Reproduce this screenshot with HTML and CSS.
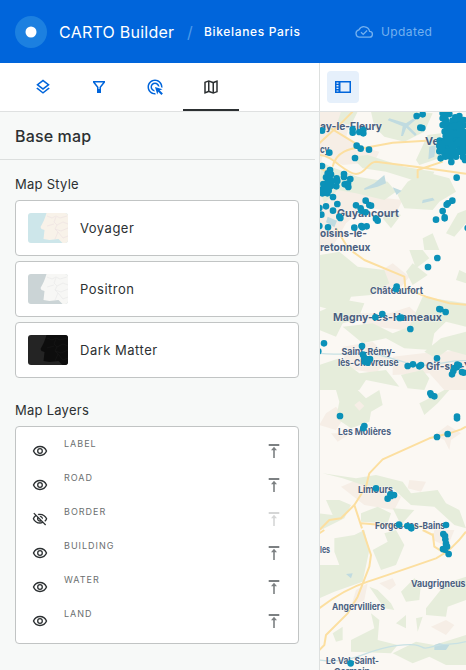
FILE: index.html
```html
<!DOCTYPE html>
<html lang="en">
<head>
<meta charset="utf-8">
<title>CARTO Builder</title>
<link rel="stylesheet" href="styles.css">
</head>
<body>
<svg width="0" height="0" class="defs">
  <defs>
    <symbol id="eye" viewBox="0 0 18 18"><path d="M2.500 9C3.800 6 6.200 4.500 9 4.500S14.200 6 15.500 9C14.200 12 11.800 13.500 9 13.500S3.800 12 2.500 9Z" fill="none" stroke="currentColor" stroke-width="1.400"/><circle cx="9" cy="9" r="2.300" fill="none" stroke="currentColor" stroke-width="1.300"/></symbol>
    <symbol id="eye-off" viewBox="0 0 24 24"><path d="M12 6c3.790 0 7.170 2.130 8.820 5.500-.59 1.220-1.420 2.270-2.410 3.120l1.410 1.410c1.390-1.230 2.490-2.770 3.180-4.530C21.270 7.110 17 4 12 4c-1.270 0-2.490.2-3.640.57l1.650 1.650C10.660 6.090 11.320 6 12 6zm-1.070 1.140L13 9.210c.57.25 1.030.71 1.280 1.280l2.070 2.070c.08-.34.14-.7.14-1.070C16.500 9.010 14.480 7 12 7c-.37 0-.72.05-1.070.14zM2.010 3.870l2.680 2.680C3.060 7.830 1.770 9.530 1 11.500 2.730 15.890 7 19 12 19c1.520 0 2.980-.29 4.320-.82l3.420 3.420 1.410-1.410L3.420 2.450 2.010 3.870zm7.500 7.500l2.610 2.610c-.04.01-.08.02-.12.02-1.380 0-2.500-1.120-2.500-2.500 0-.05.01-.08.01-.13zm-3.400-3.400l1.750 1.750c-.23.55-.36 1.150-.36 1.780 0 2.480 2.020 4.500 4.500 4.500.63 0 1.230-.13 1.770-.36l.98.98c-.88.24-1.800.38-2.750.38-3.790 0-7.170-2.130-8.820-5.500.7-1.430 1.720-2.610 2.930-3.530z" fill="currentColor"/></symbol>
    <symbol id="to-top" viewBox="0 0 18 18"><path d="M3.700 2h10.600v2H3.700zM8.200 16V8.200H6l3-3.400 3 3.400H9.800V16z" fill="currentColor"/></symbol>
  </defs>
</svg>
<div class="app">
  <header class="header">
    <svg class="logo" viewBox="0 0 32 32"><circle cx="16" cy="16" r="16" fill="#1c80e0"/><circle cx="16" cy="16" r="5.500" fill="#fff"/></svg>
    <span class="product">CARTO Builder</span>
    <span class="slash">/</span>
    <span class="project">Bikelanes Paris</span>
    <svg class="cloud" viewBox="0 0 18 18"><path d="M4.500 14.200h9.800a2.950 2.950 0 0 0 .3-5.900A5.700 5.700 0 0 0 3.900 6.900 3.700 3.700 0 0 0 4.500 14.200ZM6 9.300l2.200 2.100 3.900-3.900" fill="none" stroke="currentColor" stroke-width="1.300"/></svg>
    <span class="status">Updated</span>
  </header>
  <main class="body">
    <aside class="sidebar">
      <nav class="tabs">
        <div class="tab"><svg viewBox="0 0 24 24"><path d="M11.990 18.540l-7.370-5.730L3 14.070l9 7 9-7-1.630-1.270zM12 16l7.360-5.730L21 9l-9-7-9 7 1.630 1.270L12 16zm0-11.470L17.740 9 12 13.470 6.260 9 12 4.530z"/></svg></div>
        <div class="tab"><svg viewBox="0 0 18 18"><path d="M3 3h12v1.500l-4 5V15H7V9.500l-4-5zM5 4.500l3.500 4.400V11h1V8.900L13 4.500z" fill-rule="evenodd"/></svg></div>
        <div class="tab"><svg viewBox="0 0 24 24"><path d="M11.710 17.990C8.530 17.840 6 15.220 6 12c0-3.310 2.690-6 6-6 3.220 0 5.840 2.530 5.990 5.710l-2.100-.63C15.480 9.310 13.890 8 12 8c-2.210 0-4 1.790-4 4 0 1.890 1.310 3.480 3.080 3.890l.63 2.100zM22 12c0 .3-.01.6-.04.9l-1.970-.59c.01-.1.010-.21.010-.31 0-4.420-3.580-8-8-8s-8 3.580-8 8 3.580 8 8 8c.1 0 .21 0 .31-.01l.59 1.970c-.3.03-.6.04-.9.04-5.520 0-10-4.480-10-10S6.480 2 12 2s10 4.480 10 10zm-3.770 4.260L22 15l-10-3 3 10 1.260-3.770 4.270 4.270 1.980-1.980-4.280-4.260z"/></svg></div>
        <div class="tab active"><svg viewBox="0 0 24 24"><path d="M20.500 3l-.16.03L15 5.100 9 3 3.360 4.900c-.21.07-.36.25-.36.48V20.500c0 .28.22.5.5.5l.16-.03L9 18.900l6 2.100 5.640-1.900c.21-.07.36-.25.36-.48V3.500c0-.28-.22-.5-.5-.5zM10 5.470l4 1.400v11.660l-4-1.400V5.470zm-5 .99l3-1.010v11.700l-3 1.160V6.460zm14 11.080l-3 1.010V6.860l3-1.160v11.840z"/></svg></div>
      </nav>
      <h1 class="panel-title">Base map</h1>
      <div class="panel">
        <h2 class="section">Map Style</h2>
        <div class="styles">
          <div class="style voyager"><svg class="thumb" viewBox="0 0 40 30"><path class="sea" d="M0 0h40v30H0z"/><path class="land" d="M18.500 0C17 5 15 10 12.500 14l1 2 3 1-1 9 6 1 9-1 4 4H40V0z"/><path class="lines" d="M19 3l5 2 4-2 4 2 7-2M28 4l-2 5 3 3-2 4 3 3-3 7M29 12l6-3 5 2M19 13l7-2M27 16l6 2 7-3M30 19l5 6 5-2"/></svg><span>Voyager</span></div>
          <div class="style positron"><svg class="thumb" viewBox="0 0 40 30"><path class="sea" d="M0 0h40v30H0z"/><path class="land" d="M18.500 0C17 5 15 10 12.500 14l1 2 3 1-1 9 6 1 9-1 4 4H40V0z"/><path class="lines" d="M19 3l5 2 4-2 4 2 7-2M28 4l-2 5 3 3-2 4 3 3-3 7M29 12l6-3 5 2M19 13l7-2M27 16l6 2 7-3M30 19l5 6 5-2"/></svg><span>Positron</span></div>
          <div class="style dark"><svg class="thumb" viewBox="0 0 40 30"><path class="sea" d="M0 0h40v30H0z"/><path class="land" d="M18.500 0C17 5 15 10 12.500 14l1 2 3 1-1 9 6 1 9-1 4 4H40V0z"/><path class="lines" d="M19 3l5 2 4-2 4 2 7-2M28 4l-2 5 3 3-2 4 3 3-3 7M29 12l6-3 5 2M19 13l7-2M27 16l6 2 7-3M30 19l5 6 5-2"/></svg><span>Dark Matter</span></div>
        </div>
        <h2 class="section layers-title">Map Layers</h2>
        <div class="layers">
          <div class="layer"><svg class="eye"><use href="#eye"/></svg><span>LABEL</span><svg class="top"><use href="#to-top"/></svg></div>
          <div class="layer"><svg class="eye"><use href="#eye"/></svg><span>ROAD</span><svg class="top"><use href="#to-top"/></svg></div>
          <div class="layer hidden"><svg class="eye off"><use href="#eye-off"/></svg><span>BORDER</span><svg class="top"><use href="#to-top"/></svg></div>
          <div class="layer"><svg class="eye"><use href="#eye"/></svg><span>BUILDING</span><svg class="top"><use href="#to-top"/></svg></div>
          <div class="layer"><svg class="eye"><use href="#eye"/></svg><span>WATER</span><svg class="top"><use href="#to-top"/></svg></div>
          <div class="layer"><svg class="eye"><use href="#eye"/></svg><span>LAND</span><svg class="top"><use href="#to-top"/></svg></div>
        </div>
      </div>
    </aside>
    <section class="content">
      <div class="toolbar"><div class="toggle"><svg viewBox="0 0 18 18"><path d="M1 3h16v12H1zM6.500 4.500v9h9v-9zM2.500 4.500v1.200h2V4.500zM2.500 7v1.400h2V7zM2.500 9.700v1.400h2V9.700zM2.500 12.400v1.100h2v-1.100z" fill-rule="evenodd"/></svg></div></div>
      <svg class="map" viewBox="320 112 146 558">
        <path fill="#fbf8f3" d="M320 112h146v558H320z"/>
        <g transform="translate(316 110) scale(.33333)">
          <path class="town" d="M10 5h70l20 40-10 40 40 25 30 15-20 35-60 5-60-30-10 50H10zM10 240l90-20 70 40 90 10-20 40-90-20-60 50-40 70H10zM150 115l40 10-15 30-30-5zM255 170l60 10-10 30-50-15z"/>
          <path class="wood" d="M165 5h120l65 5-25 55-60 30-60-15-30-30zM75 5h50l-20 40-40-10zM105 140l50-5 110 35 90 15-15 35-50-10-80-25-70-10zM15 155l30 15 80 30 90 15 25 30-35 25-85-20-55-10-40 40-15-40zM275 215l50-30 75 20 20 40-50 30-20 25-85-5-20-40zM335 75l40-5-5 75-60 20-10-15zM200 325l20-25 35 15-30 40zM390 370l35-60 25-10v40l-35 40zM320 385l30-15 20 50h-45z"/>
          <path class="water" d="M220 25l50 15 30-20 5 4-28 24 25 25-5 5-26-25-10 25h-6l5-29-45-18zM145 235l30-15 30-25 5 25-25 10-40 10zM340 110l20-5-5 35-18 8zM230 232l27 10-15 13zM320 270l30-7 6 8-38 9zM35 320l28 12-8 20-25-15z"/>
          <path class="road" d="M10 135C50 135 85 190 120 192C150 192 155 155 180 155L310 172 450 191M10 100L75 40 110 5M45 55L110 95 140 115 230 98 330 92M55 200L15 175M305 205v-25l75-25M50 170C60 120 110 115 140 110M60 355L100 420"/>
        </g>
        <g transform="translate(316 250) scale(.33333)">
          <path class="town" d="M150 90l80-50 50 40-40 50-70-10zM130 190l90 0 60-20 50 45-70 25-120-15zM80 290l90-15 50 50-40 45-90-15zM230 320l90-10 130-10v120h-65l-45-50-110 5z"/>
          <path class="wood" d="M10 15l60-10 55 45 80 10 15 40-55 35-60 5-20 50-75-20zM10 185l80-35 55 10-20 50-45 10-20 40-50-20zM80 230l90-10 60 30 50-20 40-90 130 20v70l-60-15-35 35-10 50-80-5-55-30-70 15zM10 345l60-20 60 45 80-10 40 50-100-20-20 30H10zM270 65l20-25 45 35-45 30zM280 0l40 0 20 25-40 30zM420 90l10-30 20 10v30zM325 305l50-40 75-20v70l-55-15-35 25zM255 375l65-15 20 25-15 35-50-5z"/>
          <path class="stream" d="M10 310C80 320 130 300 190 315S290 350 340 345 400 330 450 332"/>
          <path class="road" d="M110 5L145 30 265 80 268 115 330 140 400 160 450 164"/>
        </g>
        <g transform="translate(316 390) scale(.33333)">
          <path class="town" d="M30 70l30-20 25 30-25 40-50-15zM45 130l60 0-40 25zM355 135l40-30 40 25-30 20-5 30-15-30zM75 290l70-30 110 60-20 40-90-15zM280 270l50 5-15 30-40-10z"/>
          <path class="wood" d="M60 0h65l25 25 40-25 10 45-35 20-5 30-55 20-45-30 10-50zM310 40l20-10 55-30h15l-35 40-40 35zM20 250l100 15 60-10 80 20 25 35 80-10 25 40 40 20 20 55-35-10-60-55-70-5-55-50-90-10-60-20zM30 330l40 0 35 15-20 40-70 35H10v-50l40 5zM135 370l50-20 40 20-10 30-80-5zM230 355l65 5-40 45z"/>
          <path class="town" d="M115 45l15-12 15 15-15 14z"/>
          <path class="road" d="M450 110L435 118 400 130 340 145 200 208 160 250 150 290 115 345 75 385 40 390 10 420M115 345L138 415M135 400L200 405 320 410"/>
        </g>
        <g transform="translate(316 530) scale(.33333)">
          <path class="town" d="M120 180l35-20-10 50-40 20zM190 160l40-15 10 20-20 15zM360 175l20-10 5 20zM345 290l45-20 25 15-25 30zM355 0h60l-20 50-45-20z"/>
          <path class="wood" d="M55 25l60-10 30-15 15 60-20 95-85 30-45 20V105l60 0-15-40zM170 60l45-25-10-25 35-10 25 45-25 60-45 15zM160 170l25 10 40 40 10 20-30-5zM255 185l40-40 20 15-5 50-40 5zM330 235l60-75 60-20v70l-55 20-5 30-60-5zM50 310l30-20 0 40-20 5zM105 330l70-35-10-45 25 20-5 60 60 15-20 25-120-5zM240 280l30-25 0 40zM300 265l20-5-15 45zM230 370l70-35 55 10 95-30v90l-60 0-50-25-50 20z"/>
          <path class="water" d="M355 345l15-5 30 5-10 15-35 0zM90 132l20-2-5 15z"/>
          <path class="stream" d="M10 390C120 405 140 360 240 347S300 365 350 350 400 350 450 335"/>
          <path class="road" d="M10 235Q80 180 155 155T360 85Q410 60 450 5M140 0L165 75 160 110 125 200 95 250 30 315 25 345 10 360M10 10L25 0M350 10l5 40 35 22M320 0l30 15"/>
        </g>
        <g class="place">
          <text x="320" y="129.500" textLength="62" lengthAdjust="spacingAndGlyphs">ay-le-Fleury</text>
          <text x="320" y="153" textLength="9.500" lengthAdjust="spacingAndGlyphs">cy</text>
          <text x="425" y="145" textLength="14" lengthAdjust="spacingAndGlyphs">Ve</text>
          <text x="337" y="217" textLength="62" lengthAdjust="spacingAndGlyphs">Guyancourt</text>
          <text x="320" y="237" textLength="47" lengthAdjust="spacingAndGlyphs">oisins-le-</text>
          <text x="320" y="250.500" textLength="50.500" lengthAdjust="spacingAndGlyphs">retonneux</text>
          <text x="333" y="321" textLength="109" lengthAdjust="spacingAndGlyphs">Magny-les-Hameaux</text>
          <text x="426" y="369.500" textLength="45" lengthAdjust="spacingAndGlyphs">Gif-sur-Y</text>
        </g>
        <g class="place small">
          <text x="370" y="293.500" textLength="53" lengthAdjust="spacingAndGlyphs">Châteaufort</text>
          <text x="341.500" y="355" textLength="54" lengthAdjust="spacingAndGlyphs">Saint-Rémy-</text>
          <text x="338" y="366" textLength="60.500" lengthAdjust="spacingAndGlyphs">lès-Chevreuse</text>
          <text x="338" y="435" textLength="53" lengthAdjust="spacingAndGlyphs">Les Molières</text>
          <text x="358" y="493" textLength="35" lengthAdjust="spacingAndGlyphs">Limours</text>
          <text x="375" y="529" textLength="70" lengthAdjust="spacingAndGlyphs">Forges-les-Bains</text>
          <text x="320" y="553" textLength="10" lengthAdjust="spacingAndGlyphs">les</text>
          <text x="411" y="587" textLength="54.500" lengthAdjust="spacingAndGlyphs">Vaugrigneus</text>
          <text x="332" y="609.500" textLength="53" lengthAdjust="spacingAndGlyphs">Angervilliers</text>
          <text x="326" y="664" textLength="53" lengthAdjust="spacingAndGlyphs">Le Val-Saint-</text>
          <text x="334" y="674.500" textLength="36" lengthAdjust="spacingAndGlyphs">Germain</text>
        </g>
        <!-- Each zero-length segment is drawn as one round marker -->
        <g class="points" transform="translate(316 110) scale(.33333)">
          <path d="M18 62h0M40 128h0M18 168h0M110 58h0M110 68h0M130 66h0M142 60h0M142 70h0M122 107h0M134 116h0M159 119h0M117 144h0M302 18h0M320 13h0M313 53h0M319 54h0M42 180h0M35 190h0M45 193h0M30 202h0M42 207h0M34 218h0M46 215h0M22 222h0M32 230h0M44 228h0M19 238h0M28 240h0M38 242h0M20 250h0M34 250h0M51 261h0M62 205h0M64 213h0M61 229h0M84 192h0M84 201h0M103 207h0M86 223h0M96 221h0M97 231h0M64 282h0M30 289h0M10 294h0M51 302h0M16 314h0M70 320h0M73 324h0M10 348h0M36 352h0M149 272h0M160 285h0M165 287h0M120 286h0M134 295h0M136 302h0M149 307h0M180 326h0M185 332h0M115 353h0M136 348h0M139 352h0M152 349h0M422 203h0M409 272h0M396 280h0M392 284h0M380 303h0M386 322h0M386 325h0M360 329h0M455 354h0"/>
          <path d="M380 10h0M390 16h0M400 12h0M380 25h0M390 32h0M380 45h0M391 49h0M403 44h0M410 32h0M418 22h0M430 18h0M428 35h0M443 30h0M447 45h0M422 50h0M436 53h0M386 65h0M399 60h0M413 65h0M427 66h0M442 65h0M389 79h0M405 78h0M421 81h0M437 80h0M450 75h0M371 92h0M384 93h0M397 92h0M411 92h0M426 94h0M442 93h0M370 108h0M383 109h0M397 108h0M412 109h0M428 108h0M443 108h0M370 124h0M384 124h0M399 124h0M413 124h0M429 124h0M444 124h0M374 145h0M388 140h0M403 140h0M420 140h0M406 156h0M441 141h0M447 150h0M449 136h0"/>
          <path d="M395 70L440 75 440 125 380 125 378 100 400 95 405 50 430 45 435 90 410 110 395 85"/>
        </g>
        <g class="points" transform="translate(316 250) scale(.33333)"><path d="M364 24h0M336 51h0M242 110h0M240 117h0M178 202h0M199 192h0M251 204h0M256 203h0M283 237h0M370 177h0M373 178h0M389 186h0M24 280h0M7 304h0M138 288h0M141 314h0M144 322h0M154 328h0M162 327h0M146 335h0M155 338h0M275 348h0M291 343h0M310 349h0M315 345h0M363 325h0M424 344h0M429 346h0M415 354h0M412 363h0M422 352h0M408 373h0M438 366h0M443 368h0"/></g>
        <g class="points" transform="translate(316 390) scale(.33333)"><path d="M343 10h0M346 15h0M355 19h0M72 78h0M145 108h0M142 114h0M423 80h0M423 85h0M395 132h0M363 141h0M180 295h0M223 313h0M225 318h0M215 326h0M234 315h0M249 404h0M274 408h0M284 411h0M390 405h0"/></g>
        <g class="points" transform="translate(316 530) scale(.33333)"><path d="M286-5h0M382 12h0M387 18h0M388 28h0M390 41h0M393 50h0M381 57h0M387 59h0M398 72h0M104 400h0"/></g>
      </svg>
    </section>
  </main>
</div>
</body>
</html>
```

FILE: styles.css
```css
* { box-sizing: border-box; }
body { margin: 0; font-family: Inter, sans-serif; color: #2c3032; }
.defs { display: block; }
.app { display: flex; flex-direction: column; width: 466px; height: 670px; overflow: hidden; }
.header { display: flex; align-items: center; flex: 0 0 63px; padding-left: 15px; background: #0065db; color: #fff; white-space: nowrap; }
.logo { width: 32px; height: 32px; margin-right: 12px; }
.product { width: 128px; font-size: 16px; letter-spacing: .25px; }
.slash { width: 17px; font-size: 16px; color: #4d9bea; }
.project { width: 151px; font-size: 12px; font-weight: 500; letter-spacing: .65px; }
.cloud { width: 18px; height: 18px; margin-right: 8px; color: #74b1ef; }
.status { padding-bottom: 1px; font-size: 12px; letter-spacing: .4px; color: #74b1ef; }
.body { display: flex; flex: 1; min-height: 0; }
.sidebar { flex: 0 0 320px; background: #f7f9f8; border-right: 1px solid #dde0df; }
.tabs { display: flex; height: 49px; padding-left: 15px; background: #fff; border-bottom: 1px solid #dfe1e1; }
.tab { display: flex; align-items: center; justify-content: center; width: 56px; height: 48px; color: #0065db; }
.tab svg, .toggle svg { width: 18px; height: 18px; fill: currentColor; }
.tab.active { color: #2c3032; border-bottom: 2px solid #2c3032; padding-top: 2px; }
.panel-title { display: flex; align-items: center; width: 315px; height: 48px; margin: 0; padding-left: 15px; border-bottom: 1px solid #dcdfde; font-size: 16px; font-weight: 500; letter-spacing: .15px; }
.panel { padding: 14px 20px 0 15px; }
.section { margin: 0 0 6px; font-size: 13px; line-height: 20px; font-weight: 400; letter-spacing: .25px; }
.styles { display: flex; flex-direction: column; gap: 5px; }
.style { display: flex; align-items: center; gap: 12px; height: 56px; padding-left: 12px; background: #fff; border: 1px solid #c1c4c4; border-radius: 4px; font-size: 13px; letter-spacing: .5px; }
.thumb { width: 40px; height: 30px; border-radius: 3px; }
.lines { fill: none; stroke-width: .7; }
.voyager .sea { fill: #cde6ea; }
.voyager .land { fill: #f8f2e9; }
.voyager .lines { stroke: #eee3e2; }
.positron .sea { fill: #cbd4d6; }
.positron .land { fill: #f7f7f5; }
.positron .lines { stroke: #eaeaea; }
.dark .sea { fill: #242424; }
.dark .land { fill: #0d0d0d; }
.dark .lines { stroke: #171717; }
.layers-title { margin-top: 22px; }
.layers { height: 218px; padding: 7px 15px; background: #fff; border: 1px solid #c1c4c4; border-radius: 4px; }
.layer { display: flex; height: 34px; }
.layer span { width: 201px; margin-left: 15px; padding-top: 4px; font-size: 9px; line-height: 12px; letter-spacing: 1px; color: #6b6f70; }
.eye, .top { width: 18px; height: 18px; margin-top: 8px; flex: none; }
.eye.off { padding: 1px; }
.top { color: #7c8082; }
.hidden .top { color: #d5d6d6; }
.content { display: flex; flex-direction: column; width: 146px; }
.toolbar { height: 49px; padding: 8px 7px; background: #fff; border-bottom: 1px solid #dfe1e1; }
.toggle { display: flex; align-items: center; justify-content: center; width: 32px; height: 32px; border-radius: 4px; background: #e6f0fb; color: #0065db; }
.map { display: block; width: 146px; height: 558px; }
.town { fill: #f6eee6; }
.wood { fill: #e6eddb; }
.water { fill: #c0dbe0; }
.stream { fill: none; stroke: #c8e1e4; stroke-width: 4; }
.road { fill: none; stroke: #fcdfa0; stroke-width: 6; stroke-linejoin: round; }
.place { fill: #4a6080; font-size: 11px; font-weight: 700; stroke: #fff; stroke-opacity: .5; stroke-width: 1px; paint-order: stroke; }
.place.small { font-size: 9.2px; }
.points { fill: none; stroke: #0b91b8; stroke-width: 20; stroke-linecap: round; stroke-linejoin: round; }
```
